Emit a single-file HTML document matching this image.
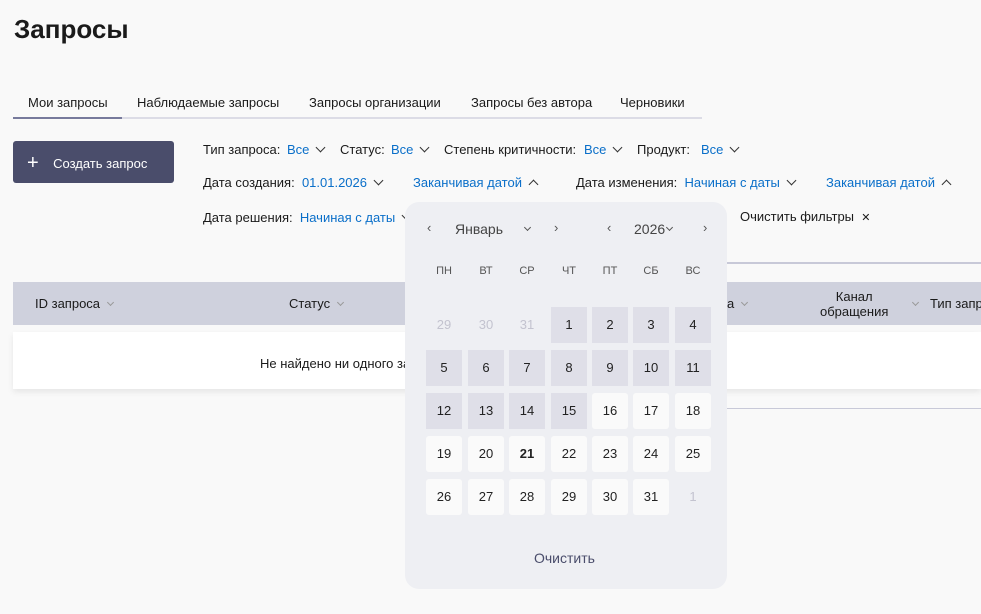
<!DOCTYPE html>
<html><head><meta charset="utf-8"><style>
*{margin:0;padding:0;box-sizing:border-box}
body{width:981px;height:614px;overflow:hidden;background:#f9f9f9;font-family:"Liberation Sans","DejaVu Sans",sans-serif;color:#1a1a1a;position:relative;font-size:13px}
.a{position:absolute;white-space:nowrap}
.b{color:#0a6fc9}
.chev{display:inline-block;width:7px;height:7px;border-right:1.5px solid #333;border-bottom:1.5px solid #333;transform:rotate(45deg);margin-left:8px;position:relative;top:-3px}
.up{transform:rotate(-135deg);top:1px}
.sm{display:inline-block;width:5px;height:5px;border-right:1px solid #999;border-bottom:1px solid #999;transform:rotate(45deg);margin-left:8px;position:relative;top:-3px}
.cell{position:absolute;width:36px;height:36px;line-height:36px;text-align:center;font-size:13px;color:#222}
.g{background:#dfdfe8}
.w{background:#fafafa;border-radius:3px}
.m{color:#c3c3cf}
</style></head><body>
<div class="a" style="left:14px;top:14px;font-size:26px;font-weight:bold">Запросы</div>
<div class="a" style="left:28px;top:95px">Мои запросы</div>
<div class="a" style="left:137px;top:95px">Наблюдаемые запросы</div>
<div class="a" style="left:309px;top:95px">Запросы организации</div>
<div class="a" style="left:471px;top:95px">Запросы без автора</div>
<div class="a" style="left:620px;top:95px">Черновики</div>
<div class="a" style="left:13px;top:117px;width:689px;height:2px;background:#dcdce6"></div>
<div class="a" style="left:13px;top:117px;width:109px;height:2px;background:#777a9c"></div>
<div class="a" style="left:13px;top:141px;width:161px;height:42px;background:#4a4d6b;border-radius:3px;color:#fff;line-height:42px;padding-left:14px"><span style="font-size:20px;position:relative;top:1px">+</span>&nbsp;&nbsp;&nbsp;&nbsp;Создать запрос</div>
<div class="a" style="left:203px;top:142px">Тип запроса:</div>
<div class="a" style="left:287px;top:142px"><span class="b">Все</span><span class="chev"></span></div>
<div class="a" style="left:340px;top:142px">Статус:</div>
<div class="a" style="left:391px;top:142px"><span class="b">Все</span><span class="chev"></span></div>
<div class="a" style="left:444px;top:142px">Степень критичности:</div>
<div class="a" style="left:584px;top:142px"><span class="b">Все</span><span class="chev"></span></div>
<div class="a" style="left:637px;top:142px">Продукт:</div>
<div class="a" style="left:701px;top:142px"><span class="b">Все</span><span class="chev"></span></div>
<div class="a" style="left:203px;top:175px">Дата создания:&nbsp;&nbsp;<span class="b">01.01.2026</span><span class="chev"></span></div>
<div class="a" style="left:413px;top:175px"><span class="b">Заканчивая датой</span><span class="chev up"></span></div>
<div class="a" style="left:576px;top:175px">Дата изменения:&nbsp;&nbsp;<span class="b">Начиная с даты</span><span class="chev"></span></div>
<div class="a" style="left:826px;top:175px"><span class="b">Заканчивая датой</span><span class="chev up"></span></div>
<div class="a" style="left:203px;top:210px">Дата решения:&nbsp;&nbsp;<span class="b">Начиная с даты</span><span class="chev"></span></div>
<div class="a" style="left:740px;top:209px">Очистить фильтры&nbsp;&nbsp;<span style="font-size:11px">✕</span></div>
<div class="a" style="left:700px;top:262px;width:281px;height:2px;background:#c8c9d8"></div>
<div class="a" style="left:13px;top:282px;width:968px;height:43px;background:#cfd1dd"></div>
<div class="a" style="left:35px;top:296px">ID запроса<span class="sm"></span></div>
<div class="a" style="left:289px;top:296px">Статус<span class="sm"></span></div>
<div class="a" style="left:718px;top:296px">ма<span class="sm"></span></div>
<div class="a" style="left:820px;top:289px;text-align:center;line-height:15px">Канал<br>обращения</div>
<div class="a" style="left:905px;top:296px"><span class="sm"></span></div>
<div class="a" style="left:930px;top:296px">Тип запр</div>
<div class="a" style="left:13px;top:332px;width:968px;height:57px;background:#fff;box-shadow:0 3px 6px rgba(0,0,0,.08)"></div>
<div class="a" style="left:260px;top:356px">Не найдено ни одного запроса</div>
<div class="a" style="left:700px;top:408px;width:281px;height:1px;background:#c8c9d8"></div>

<div class="a" style="left:405px;top:202px;width:322px;height:387px;background:#eeeff3;border-radius:14px">
<div class="a" style="left:22px;top:18px;color:#555">‹</div>
<div class="a" style="left:50px;top:19px;font-size:14px;color:#444">Январь</div>
<div class="a" style="left:112px;top:19px"><span class="sm" style="border-color:#555"></span></div>
<div class="a" style="left:149px;top:18px;color:#555">›</div>
<div class="a" style="left:202px;top:18px;color:#555">‹</div>
<div class="a" style="left:229px;top:19px;font-size:14px;color:#444">2026</div>
<div class="a" style="left:260px;top:19px"><span class="sm" style="border-color:#555;margin-left:2px"></span></div>
<div class="a" style="left:298px;top:18px;color:#555">›</div>
</div>
<div id="cal"></div>
<div class="a" style="left:534px;top:550px;font-size:14px;color:#4a4d6b">Очистить</div>
<script>
var xs=[426,468,509,551,592,633,675],ys=[307,350,393,436,479],h='';
var dn=['ПН','ВТ','СР','ЧТ','ПТ','СБ','ВС'];
for(var i=0;i<7;i++)h+='<div class="a" style="left:'+xs[i]+'px;top:265px;width:36px;text-align:center;font-size:11px;color:#555">'+dn[i]+'</div>';
var d=[29,30,31];for(var k=1;k<=31;k++)d.push(k);d.push(1);
for(var n=0;n<35;n++){var r=Math.floor(n/7),c=n%7,v=d[n],cls;
if(n<3||n==34)cls='m';else if(v<=15)cls='g';else cls='w';
h+='<div class="cell '+cls+'" style="left:'+xs[c]+'px;top:'+ys[r]+'px;'+(v==21&&n>3?'font-weight:bold':'')+'">'+v+'</div>';}
document.getElementById('cal').innerHTML=h;
</script>
</body></html>
